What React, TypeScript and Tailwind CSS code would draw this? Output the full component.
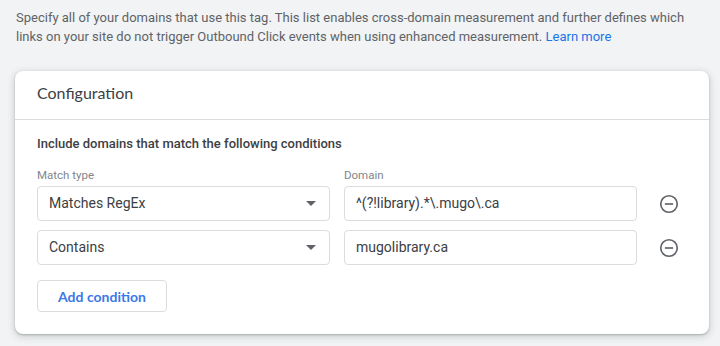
import React from "react";

const MinusIcon = () => (
  <svg width="22" height="22" viewBox="0 0 24 24" fill="none">
    <circle cx="12" cy="12" r="9" stroke="#5f6368" strokeWidth="1.8" />
    <line x1="7.5" y1="12" x2="16.5" y2="12" stroke="#5f6368" strokeWidth="1.8" />
  </svg>
);

const Arrow = () => (
  <svg width="10" height="5" viewBox="0 0 10 5">
    <path d="M0 0 L10 0 L5 5 Z" fill="#5f6368" />
  </svg>
);

function Row({ match, domain }: { match: string; domain: string }) {
  return (
    <div className="flex items-center">
      <div className="w-[293px] h-[35px] border border-[#dadce0] rounded-[4px] flex items-center justify-between pl-[11px] pr-[13px] text-[14px] text-[#3c4043]">
        <span>{match}</span>
        <Arrow />
      </div>
      <div className="w-[293px] ml-[14px] h-[35px] border border-[#dadce0] rounded-[4px] flex items-center pl-[11px] text-[14px] text-[#3c4043]">
        {domain}
      </div>
      <div className="w-[36px] ml-[14px] flex items-center justify-center">
        <MinusIcon />
      </div>
    </div>
  );
}

export default function App() {
  return (
    <div
      className="w-[720px] h-[346px] bg-[#f1f3f4] overflow-hidden"
      style={{ fontFamily: "Roboto, 'Liberation Sans', sans-serif" }}
    >
      <p className="pl-[16px] pr-[20px] pt-[8px] text-[13px] leading-[19px] text-[#5f6368]">
        Specify all of your domains that use this tag. This list enables cross-domain measurement and further defines which links on your site do not trigger Outbound Click events when using enhanced measurement.{" "}
        <span className="text-[#1a73e8]">Learn more</span>
      </p>
      <div className="mx-[15px] mt-[25px] w-[694px] bg-white rounded-[8px] shadow-[0_1px_2px_rgba(60,64,67,0.3),0_2px_6px_2px_rgba(60,64,67,0.15)]">
        <div className="h-[49px] border-b border-[#dadce0] flex items-center pl-[22px] pb-[4px]">
          <span
            className="text-[16px] text-[#3c4043]"
            style={{ fontFamily: "Lato, Roboto, sans-serif" }}
          >
            Configuration
          </span>
        </div>
        <div className="px-[22px] pt-[14px] pb-[22px]">
          <div className="text-[13px] leading-[20px] font-medium text-[#3c4043]">
            Include domains that match the following conditions
          </div>
          <div className="flex mt-[13px] mb-[3px] text-[11.5px] leading-[16px] text-[#80868b]">
            <div className="w-[293px]">Match type</div>
            <div className="w-[293px] ml-[14px]">Domain</div>
          </div>
          <div className="flex flex-col gap-[9px]">
            <Row match="Matches RegEx" domain="^(?!library).*\.mugo\.ca" />
            <Row match="Contains" domain="mugolibrary.ca" />
          </div>
          <button
            className="mt-[15px] h-[32px] w-[130px] border border-[#dadce0] rounded-[4px] text-[14px] font-bold text-[#3b78e7]"
            style={{ fontFamily: "Lato, Roboto, sans-serif" }}
          >
            Add condition
          </button>
        </div>
      </div>
    </div>
  );
}
